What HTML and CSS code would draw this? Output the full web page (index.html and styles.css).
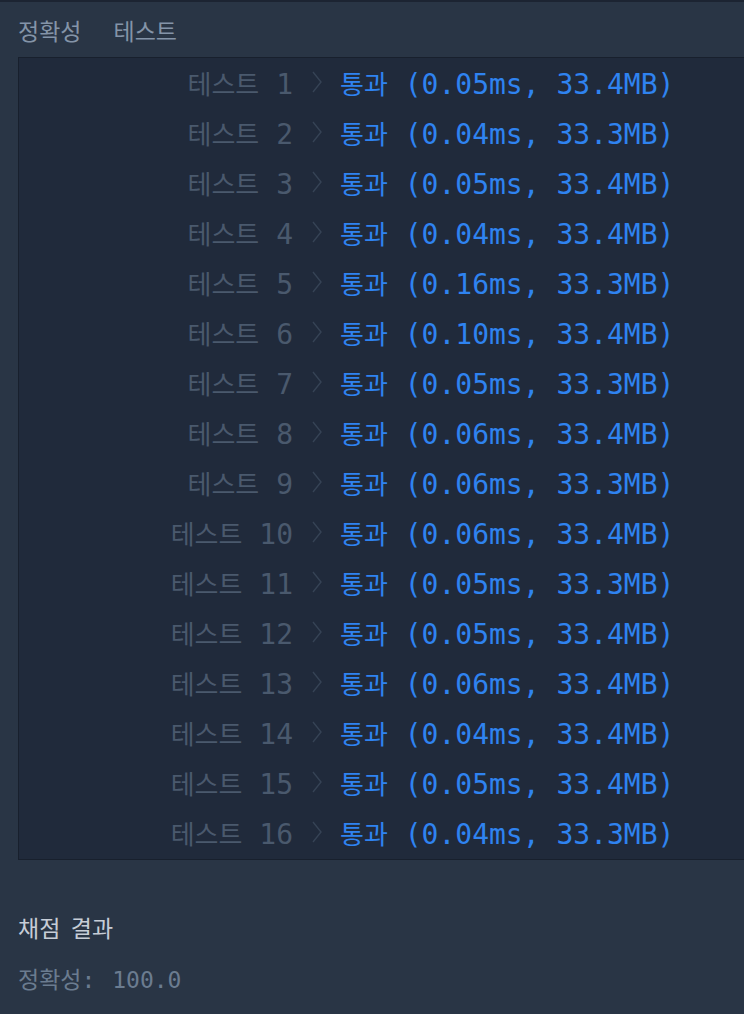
FILE: index.html
```html
<!DOCTYPE html>
<html lang="ko">
<head>
<meta charset="utf-8">
<title>채점 결과</title>
<link rel="stylesheet" href="styles.css">
</head>
<body>
<div class="topline"></div>
<div class="tabs"><span class="tab">정확성</span><span class="tab">테스트</span></div>
<div class="panel" id="panel"></div>
<section class="score">
  <h2 class="score-title"><span class="ko">채점</span> <span class="ko">결과</span></h2>
  <p class="score-line"><span class="ko">정확성</span>: <span class="num">100.0</span></p>
</section>
<script>
var data = [
 ["0.05","33.4"],["0.04","33.3"],["0.05","33.4"],["0.04","33.4"],
 ["0.16","33.3"],["0.10","33.4"],["0.05","33.3"],["0.06","33.4"],
 ["0.06","33.3"],["0.06","33.4"],["0.05","33.3"],["0.05","33.4"],
 ["0.06","33.4"],["0.04","33.4"],["0.05","33.4"],["0.04","33.3"]
];
var p = document.getElementById("panel");
var html = "";
for (var i = 0; i < data.length; i++) {
  html += '<div class="row"><span class="label"><span class="ko">테스트</span> ' + (i+1) + '</span>' +
    '<svg class="chev" width="10" height="22" viewBox="0 0 10 22"><path d="M1 1 L9 11 L1 21" fill="none" stroke="currentColor" stroke-width="1.4"/></svg>' +
    '<span class="result"><span class="ko">통과</span> (' + data[i][0] + 'ms, ' + data[i][1] + 'MB)</span></div>';
}
p.innerHTML = html;
</script>
</body>
</html>
```
FILE: styles.css
```css
html, body {
  margin: 0;
  padding: 0;
}
body {
  background: #293545;
  width: 744px;
  height: 1014px;
  overflow: hidden;
  font-family: "DejaVu Sans Mono", "Noto Sans CJK KR", monospace;
}
.ko {
  font-family: "Noto Sans CJK KR", sans-serif;
}
.topline {
  height: 2px;
  background: #1c2432;
}
.tabs {
  height: 55px;
  display: flex;
  align-items: center;
  gap: 32px;
  padding-left: 18px;
  font-family: "Noto Sans CJK KR", sans-serif;
  font-size: 23px;
  color: #8494a8;
}
.panel {
  margin-left: 18px;
  width: 760px;
  background: #202a3b;
  border: 1px solid #18202d;
  border-right: none;
  padding-bottom: 1px;
}
.row {
  height: 50px;
  box-sizing: border-box;
  padding-bottom: 2px;
  display: flex;
  align-items: center;
  font-size: 28px;
  white-space: pre;
}
.row .ko {
  font-size: 26px;
}
.label {
  width: 274px;
  text-align: right;
  color: #4a596d;
}
.chev {
  margin: 0 18px 0 19px;
  color: #364355;
}
.result {
  color: #2f83f0;
}
.score {
  padding-left: 18px;
}
.score-title {
  margin: 52px 0 0;
  font-weight: normal;
  font-size: 23px;
  line-height: 30px;
  color: #c6cdd7;
  font-family: "Noto Sans CJK KR", sans-serif;
  word-spacing: 4px;
}
.score-line {
  margin: 21px 0 0;
  font-size: 23px;
  line-height: 30px;
  color: #6b7c90;
  white-space: pre;
}
.score-line .ko {
  font-size: 23px;
}
.score-line .num {
  margin-left: 3px;
}
```
